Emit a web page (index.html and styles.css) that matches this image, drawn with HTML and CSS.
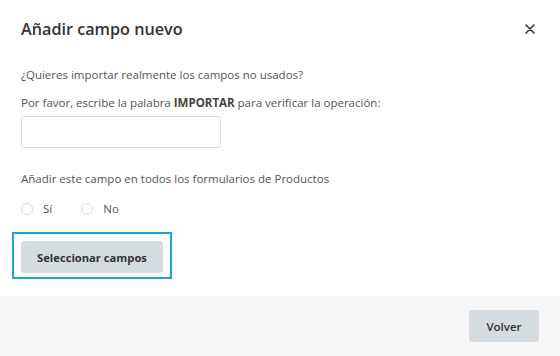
FILE: index.html
```html
<!DOCTYPE html>
<html lang="es">
<head>
    <meta charset="UTF-8">
    <meta name="viewport" content="width=device-width, initial-scale=1.0">
    <title>Añadir campo nuevo</title>
    <link rel="stylesheet" href="styles.css">
</head>
<body>
    <div class="modal">
        <div class="modal-header">
            <h1>Añadir campo nuevo</h1>
            <button class="close" aria-label="Cerrar">
                <svg width="10" height="10" viewBox="0 0 10 10">
                    <path d="M1 1L9 9M9 1L1 9" stroke="#333" stroke-width="1.6" stroke-linecap="round"/>
                </svg>
            </button>
        </div>

        <div class="modal-body">
            <p class="question">¿Quieres importar realmente los campos no usados?</p>
            <p class="hint">Por favor, escribe la palabra <strong>IMPORTAR</strong> para verificar la operación:</p>
            <input type="text" class="confirm-input">

            <p class="label">Añadir este campo en todos los formularios de Productos</p>
            <div class="radios">
                <label class="radio"><input type="radio" name="all"><span class="dot"></span>Sí</label>
                <label class="radio"><input type="radio" name="all"><span class="dot"></span>No</label>
            </div>

            <div class="focus-ring">
                <button class="button">Seleccionar campos</button>
            </div>
        </div>

        <div class="modal-footer">
            <button class="button">Volver</button>
        </div>
    </div>
</body>
</html>
```

FILE: styles.css
```css
body {
    margin: 0;
    font-family: "Open Sans", sans-serif;
    color: #555;
    background: #fff;
}
.modal {
    width: 560px;
    height: 356px;
    display: flex;
    flex-direction: column;
}
.modal-header {
    display: flex;
    align-items: center;
    justify-content: space-between;
    height: 58px;
    padding: 0 21px;
}
.modal-header h1 {
    margin: 0;
    font-size: 16.2px;
    font-weight: 600;
    color: #333;
}
.close {
    border: none;
    background: none;
    padding: 0;
    margin-right: 4px;
    width: 10px;
    height: 10px;
    display: flex;
    cursor: pointer;
}
.modal-body {
    flex: 1;
    padding: 8px 21px 0;
}
.modal-body p {
    margin: 0;
    font-size: 11.5px;
    line-height: 17px;
}
.modal-body .hint {
    margin-top: 11px;
}
.hint strong {
    font-weight: 700;
    color: #444;
}
.confirm-input {
    display: block;
    box-sizing: border-box;
    width: 200px;
    height: 32px;
    margin-top: 5px;
    border: 1px solid #dcdfe2;
    border-radius: 3px;
    background: #fff;
}
.modal-body .label {
    margin-top: 22px;
}
.radios {
    display: flex;
    gap: 29px;
    margin-top: 13px;
}
.radio {
    display: flex;
    align-items: center;
    font-size: 11.5px;
    line-height: 17px;
}
.radio input {
    display: none;
}
.dot {
    box-sizing: border-box;
    width: 12px;
    height: 12px;
    border: 1px solid #d6dadd;
    border-radius: 50%;
    margin-right: 10px;
}
.focus-ring {
    display: inline-flex;
    margin: 15px 0 0 -9px;
    padding: 7px 7px 4px;
    border: 2px solid #1ea5d5;
}
.button {
    height: 32px;
    padding: 0 16px;
    border: none;
    border-radius: 3px;
    background: #d5dce0;
    color: #333;
    font-family: "Open Sans", sans-serif;
    font-size: 11.2px;
    font-weight: 700;
    white-space: nowrap;
    cursor: pointer;
}
.focus-ring .button {
    width: 142px;
}
.modal-footer {
    height: 60px;
    background: #f6f6f6;
    display: flex;
    align-items: center;
    justify-content: flex-end;
    padding: 0 21px;
}
.modal-footer .button {
    width: 70px;
    padding: 0;
    font-size: 11.5px;
    font-weight: 600;
}
```
